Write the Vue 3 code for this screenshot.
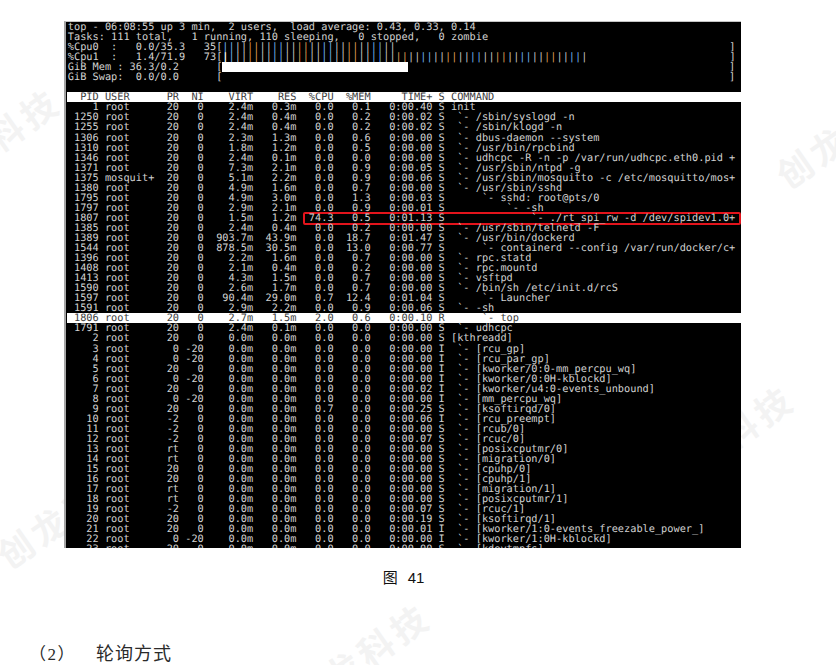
<script setup>
const L = (s, n) => String(s).padEnd(n, ' ')
const R = (s, n) => String(s).padStart(n, ' ')

const fmt = (pid, user, pr, ni, virt, res, cpu, mem, time, st, cmd) =>
  R(pid, 5) + ' ' + L(user, 8) + ' ' + R(pr, 3) + ' ' + R(ni, 3) + ' ' + R(virt, 7) + ' ' + R(res, 6) + ' ' +
  R(cpu, 5) + ' ' + R(mem, 5) + ' ' + R(time, 9) + ' ' + st + ' ' + cmd

const proc = [
  [1, 'root', 20, 0, '2.4m', '0.3m', '0.0', '0.1', '0:00.40', 'S', 'init'],
  [1250, 'root', 20, 0, '2.4m', '0.4m', '0.0', '0.2', '0:00.02', 'S', ' `- /sbin/syslogd -n'],
  [1255, 'root', 20, 0, '2.4m', '0.4m', '0.0', '0.2', '0:00.02', 'S', ' `- /sbin/klogd -n'],
  [1306, 'root', 20, 0, '2.3m', '1.3m', '0.0', '0.6', '0:00.00', 'S', ' `- dbus-daemon --system'],
  [1310, 'root', 20, 0, '1.8m', '1.2m', '0.0', '0.5', '0:00.00', 'S', ' `- /usr/bin/rpcbind'],
  [1346, 'root', 20, 0, '2.4m', '0.1m', '0.0', '0.0', '0:00.00', 'S', ' `- udhcpc -R -n -p /var/run/udhcpc.eth0.pid +'],
  [1371, 'root', 20, 0, '7.3m', '2.1m', '0.0', '0.9', '0:00.05', 'S', ' `- /usr/sbin/ntpd -g'],
  [1375, 'mosquit+', 20, 0, '5.1m', '2.2m', '0.0', '0.9', '0:00.06', 'S', ' `- /usr/sbin/mosquitto -c /etc/mosquitto/mos+'],
  [1380, 'root', 20, 0, '4.9m', '1.6m', '0.0', '0.7', '0:00.00', 'S', ' `- /usr/sbin/sshd'],
  [1795, 'root', 20, 0, '4.9m', '3.0m', '0.0', '1.3', '0:00.03', 'S', '     `- sshd: root@pts/0'],
  [1797, 'root', 20, 0, '2.9m', '2.1m', '0.0', '0.9', '0:00.01', 'S', '         `- -sh'],
  [1807, 'root', 20, 0, '1.5m', '1.2m', '74.3', '0.5', '0:01.13', 'S', '             `- ./rt_spi_rw -d /dev/spidev1.0+'],
  [1385, 'root', 20, 0, '2.4m', '0.4m', '0.0', '0.2', '0:00.00', 'S', ' `- /usr/sbin/telnetd -F'],
  [1389, 'root', 20, 0, '903.7m', '43.9m', '0.0', '18.7', '0:01.47', 'S', ' `- /usr/bin/dockerd'],
  [1544, 'root', 20, 0, '878.5m', '30.5m', '0.0', '13.0', '0:00.77', 'S', '     `- containerd --config /var/run/docker/c+'],
  [1396, 'root', 20, 0, '2.2m', '1.6m', '0.0', '0.7', '0:00.00', 'S', ' `- rpc.statd'],
  [1408, 'root', 20, 0, '2.1m', '0.4m', '0.0', '0.2', '0:00.00', 'S', ' `- rpc.mountd'],
  [1413, 'root', 20, 0, '4.3m', '1.5m', '0.0', '0.7', '0:00.00', 'S', ' `- vsftpd'],
  [1590, 'root', 20, 0, '2.6m', '1.7m', '0.0', '0.7', '0:00.00', 'S', ' `- /bin/sh /etc/init.d/rcS'],
  [1597, 'root', 20, 0, '90.4m', '29.0m', '0.7', '12.4', '0:01.04', 'S', '     `- Launcher'],
  [1591, 'root', 20, 0, '2.9m', '2.2m', '0.0', '0.9', '0:00.06', 'S', ' `- -sh'],
  [1806, 'root', 20, 0, '2.7m', '1.5m', '2.0', '0.6', '0:00.10', 'R', '     `- top'],
  [1791, 'root', 20, 0, '2.4m', '0.1m', '0.0', '0.0', '0:00.00', 'S', ' `- udhcpc'],
  [2, 'root', 20, 0, '0.0m', '0.0m', '0.0', '0.0', '0:00.00', 'S', '[kthreadd]'],
]

const kernel = [
  [3, 0, -20, '0.0', '0:00.00', 'I', 'rcu_gp'],
  [4, 0, -20, '0.0', '0:00.00', 'I', 'rcu_par_gp'],
  [5, 20, 0, '0.0', '0:00.00', 'I', 'kworker/0:0-mm_percpu_wq'],
  [6, 0, -20, '0.0', '0:00.00', 'I', 'kworker/0:0H-kblockd'],
  [7, 20, 0, '0.0', '0:00.02', 'I', 'kworker/u4:0-events_unbound'],
  [8, 0, -20, '0.0', '0:00.00', 'I', 'mm_percpu_wq'],
  [9, 20, 0, '0.7', '0:00.25', 'S', 'ksoftirqd/0'],
  [10, -2, 0, '0.0', '0:00.06', 'I', 'rcu_preempt'],
  [11, -2, 0, '0.0', '0:00.00', 'S', 'rcub/0'],
  [12, -2, 0, '0.0', '0:00.07', 'S', 'rcuc/0'],
  [13, 'rt', 0, '0.0', '0:00.00', 'S', 'posixcputmr/0'],
  [14, 'rt', 0, '0.0', '0:00.00', 'S', 'migration/0'],
  [15, 20, 0, '0.0', '0:00.00', 'S', 'cpuhp/0'],
  [16, 20, 0, '0.0', '0:00.00', 'S', 'cpuhp/1'],
  [17, 'rt', 0, '0.0', '0:00.00', 'S', 'migration/1'],
  [18, 'rt', 0, '0.0', '0:00.00', 'S', 'posixcputmr/1'],
  [19, -2, 0, '0.0', '0:00.07', 'S', 'rcuc/1'],
  [20, 20, 0, '0.0', '0:00.19', 'S', 'ksoftirqd/1'],
  [21, 20, 0, '0.0', '0:00.01', 'I', 'kworker/1:0-events_freezable_power_'],
  [22, 0, -20, '0.0', '0:00.00', 'I', 'kworker/1:0H-kblockd'],
  [23, 20, 0, '0.0', '0:00.00', 'S', 'kdevtmpfs'],
]

const uptime = 'top - 06:08:55 up 3 min,  2 users,  load average: 0.43, 0.33, 0.14'
const tasks = 'Tasks: 111 total,   1 running, 110 sleeping,   0 stopped,   0 zombie'
const memLabel = 'GiB Mem : 36.3/0.2      ['
const swapLabel = 'GiB Swap:  0.0/0.0      ['
const header = '  PID USER      PR  NI    VIRT    RES  %CPU  %MEM     TIME+ S COMMAND'

const rows = [
  ...proc.map((p) => ({ text: fmt(...p), hi: p[0] === 1806 })),
  ...kernel.map((k) => ({
    text: fmt(k[0], 'root', k[1], k[2], '0.0m', '0.0m', k[3], '0.0', k[4], k[5], ' `- [' + k[6] + ']'),
    hi: false,
  })),
]

const tones = ['blue', 'blue', 'grey', 'grey', 'orange', 'orange', 'grey', 'grey']
const bar = (n) => Array.from({ length: n }, (_, i) => tones[i % tones.length])

const INNER = 82
const meters = [
  { label: '%Cpu0  :   0.0/35.3   35[', bars: bar(28), first: false },
  { label: '%Cpu1  :   1.4/71.9   73[', bars: bar(59), first: true },
]
const blank = (n) => ' '.repeat(n)

const marks = [
  { x: -10, y: 141 },
  { x: 845, y: 132 },
  { x: 66, y: 512 },
  { x: 724, y: 438 },
  { x: 360, y: 656 },
]
</script>

<template>
  <div class="page">
    <span
      v-for="(m, i) in marks"
      :key="i"
      class="mark"
      :style="{ left: m.x + 'px', top: m.y + 'px' }"
    >创龙科技</span>

    <div class="terminal">
      <div class="callout"></div>
      <div class="row">{{ uptime }}</div>
      <div class="row">{{ tasks }}</div>
      <div v-for="m in meters" :key="m.label" class="row">{{ m.label }}<span
          v-for="(tone, i) in m.bars"
          :key="i"
          :class="['tick', tone, { solid: m.first && i === 0 }]"
        >|</span>{{ blank(INNER - m.bars.length) }}]</div>
      <div class="row">{{ memLabel }}<span class="membar"></span>{{ blank(INNER - 30) }}]</div>
      <div class="row">{{ swapLabel }}{{ blank(INNER) }}]</div>
      <div class="row"></div>
      <div class="row hi">{{ header }}</div>
      <div v-for="r in rows" :key="r.text" :class="['row', { hi: r.hi }]">{{ r.text }}</div>
    </div>

    <div class="caption">
      <span>图</span>
      <span>41</span>
    </div>

    <div class="heading">
      <span class="num">（2）</span>
      <span class="title">轮询方式</span>
    </div>
  </div>
</template>

<style scoped>
.page {
  position: relative;
  width: 836px;
  height: 665px;
  overflow: hidden;
  background: #fff;
  padding-top: 21px;
  box-sizing: border-box;
}
.mark {
  position: absolute;
  transform: translate(-50%, -50%) rotate(-35deg);
  font-family: "Noto Sans CJK SC", sans-serif;
  font-weight: 700;
  font-size: 35px;
  letter-spacing: 5px;
  color: #f3f3f3;
  white-space: nowrap;
}
.terminal {
  position: relative;
  box-sizing: border-box;
  width: 677px;
  height: 527px;
  margin-left: 64px;
  border-left: 2px solid #a4a4a4;
  border-top: 1px solid #c4c4c4;
  background: #000;
  overflow: hidden;
  color: #d2d2d2;
  font-family: "DejaVu Sans Mono", monospace;
  font-size: 10.27px;
  text-rendering: geometricPrecision;
}
.row {
  position: relative;
  height: 10.05px;
  line-height: 10.05px;
  padding-left: 1.8px;
  white-space: pre;
}
.hi {
  background: #fff;
  color: #3c3c3c;
  margin-left: 1px;
  padding-left: 0.8px;
}
.tick.blue { color: #6fb0e6; }
.tick.grey { color: #c4c4c4; }
.tick.orange { color: #dc9a55; }
.tick.solid { color: #fff; font-weight: 700; }
.membar {
  display: inline-block;
  width: 185.4px;
  height: 10px;
  vertical-align: top;
  background: #fff;
}
.callout {
  position: absolute;
  left: 237px;
  top: 190px;
  width: 438px;
  height: 13px;
  box-sizing: border-box;
  border: 2px solid #e3141c;
  border-radius: 2px;
}
.caption {
  position: relative;
  margin: 20px 0 0 66px;
  width: 675px;
  height: 20px;
  line-height: 20px;
  display: flex;
  justify-content: center;
  gap: 10px;
  font-family: "Liberation Sans", "Noto Sans CJK SC", sans-serif;
  font-size: 15px;
  color: #111;
}
.heading {
  position: relative;
  margin-top: 52px;
  padding-left: 29px;
  display: flex;
  align-items: center;
  gap: 20px;
  height: 24px;
  font-family: "Liberation Serif", "Noto Sans CJK SC", sans-serif;
  color: #2a2a2a;
}
.num {
  font-size: 17px;
  letter-spacing: 1.5px;
}
.title {
  font-size: 18px;
  letter-spacing: 1px;
}
</style>
